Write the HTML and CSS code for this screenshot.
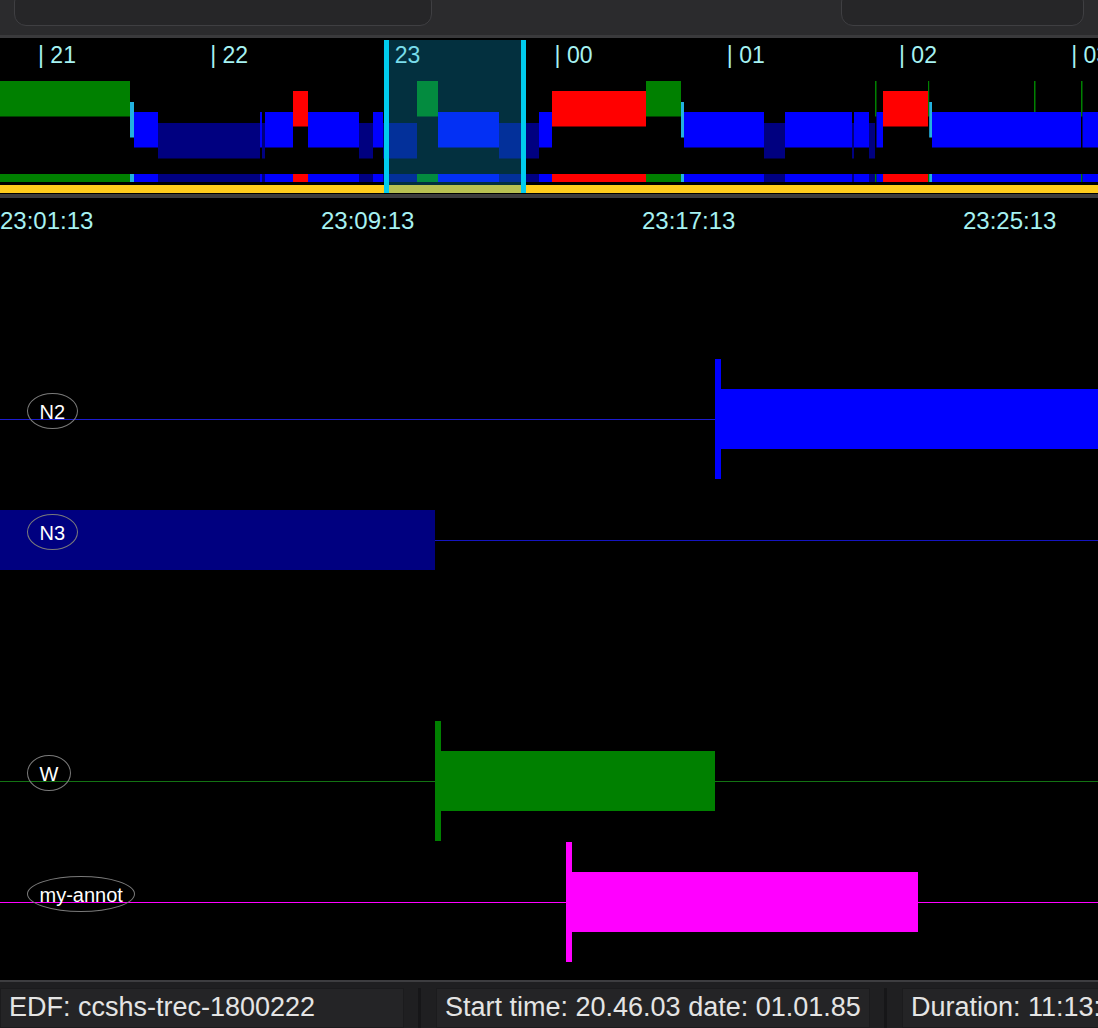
FILE: index.html
```html
<!DOCTYPE html>
<html lang="en">
<head>
    <meta charset="UTF-8">
    <title>Hypnogram viewer</title>
    <link rel="stylesheet" href="styles.css">
</head>
<body>
    <!-- Barra superior -->
    <div class="toolbar">
        <div class="tool-box first"></div>
        <div class="tool-box second"></div>
    </div>

    <!-- Vista general del hipnograma -->
    <svg id="overview" class="overview" width="1098" height="160" viewBox="0 0 1098 160"></svg>

    <div class="main">
        <!-- Eje de tiempo -->
        <div class="axis">
            <span>23:01:13</span>
            <span>23:09:13</span>
            <span>23:17:13</span>
            <span>23:25:13</span>
        </div>

        <!-- Pistas de anotaciones -->
        <div class="tracks">
            <div class="track"></div>

            <div class="track">
                <div class="line n2-line"></div>
                <div class="tick n2" style="left: 715px"></div>
                <div class="bar n2" style="left: 721px; width: 400px"></div>
                <div class="label">N2</div>
            </div>

            <div class="track">
                <div class="line n3-line"></div>
                <div class="bar n3" style="left: 0; width: 435px"></div>
                <div class="label">N3</div>
            </div>

            <div class="track short"></div>

            <div class="track">
                <div class="line w-line"></div>
                <div class="tick w" style="left: 435px"></div>
                <div class="bar w" style="left: 441px; width: 274px"></div>
                <div class="label">W</div>
            </div>

            <div class="track">
                <div class="line annot-line"></div>
                <div class="tick annot" style="left: 566px"></div>
                <div class="bar annot" style="left: 572px; width: 346px"></div>
                <div class="label">my-annot</div>
            </div>
        </div>
    </div>

    <!-- Barra de estado -->
    <div class="statusbar">
        <div class="cell edf">EDF: ccshs-trec-1800222</div>
        <div class="sep"></div>
        <div class="cell start">Start time: 20.46.03 date: 01.01.85</div>
        <div class="sep"></div>
        <div class="cell duration">Duration: 11:13:00</div>
    </div>

    <script>
        const NS = "http://www.w3.org/2000/svg";
        const svg = document.getElementById("overview");

        // Posicion vertical y color de cada estadio
        const stages = {
            W:  { y: 43, color: "#008000" },
            R:  { y: 53, color: "#ff0000" },
            N1: { y: 64, color: "#22b1e0" },
            N2: { y: 74, color: "#0000ff" },
            N3: { y: 85, color: "#000080" }
        };

        // [inicio, fin, estadio] en pixeles
        const epochs = [
            [0, 130, "W"], [130, 134, "N1"], [134, 158, "N2"], [158, 260, "N3"],
            [260, 262, "N2"], [262, 265, "N3"], [265, 293, "N2"], [293, 308, "R"],
            [308, 359, "N2"], [359, 373, "N3"], [373, 383, "N2"], [383, 417, "N3"],
            [417, 438, "W"], [438, 499, "N2"], [499, 539, "N3"], [539, 552, "N2"],
            [552, 646, "R"], [646, 681, "W"], [681, 684, "N1"], [684, 764, "N2"],
            [764, 785, "N3"], [785, 852, "N2"], [852, 854, "N3"], [854, 869, "N2"],
            [869, 875, "N3"], [875, 876.5, "W"], [876.5, 883, "N2"], [883, 928, "R"],
            [928, 929.2, "W"], [929.2, 932, "N1"], [932, 1081, "N2"], [1081, 1082.5, "W"],
            [1082.5, 1098, "N2"]
        ];

        function rect(x, y, w, h, fill, cls) {
            const r = document.createElementNS(NS, "rect");
            r.setAttribute("x", x);
            r.setAttribute("y", y);
            r.setAttribute("width", w);
            r.setAttribute("height", h);
            if (fill) r.setAttribute("fill", fill);
            if (cls) r.setAttribute("class", cls);
            svg.appendChild(r);
        }

        epochs.forEach(function(e) {
            const st = stages[e[2]];
            rect(e[0], st.y, e[1] - e[0], 35.5, st.color);
            rect(e[0], 136, e[1] - e[0], 8, st.color);
        });

        // pequeño despertar
        rect(1034, 43, 1.5, 31, "#008000");

        rect(0, 147, 1098, 8, null, "yellow");
        rect(0, 156, 1098, 4, null, "rule");

        // Etiquetas de horas
        ["21", "22", "23", "00", "01", "02", "03"].forEach(function(h, i) {
            const t = document.createElementNS(NS, "text");
            t.setAttribute("x", 38 + i * 172.2);
            t.setAttribute("y", 25);
            t.setAttribute("class", "hour");
            t.textContent = "| " + h;
            svg.appendChild(t);
        });

        // Ventana seleccionada
        rect(389, 2, 132, 153, null, "window");
        rect(384, 2, 5, 153, null, "handle");
        rect(521, 2, 5, 153, null, "handle");
    </script>
</body>
</html>
```

FILE: styles.css
```css
html, body {
    margin: 0;
    height: 100%;
}

body {
    font-family: "Liberation Sans", Arial, sans-serif;
    background-color: #000;
    display: flex;
    flex-direction: column;
    height: 1028px;
    overflow: hidden;
}

.toolbar {
    height: 35px;
    flex: none;
    display: flex;
    background-color: #2b2b2d;
    border-bottom: 3px solid #3a3a3c;
    overflow: hidden;
}

.tool-box {
    height: 36px;
    margin-top: -10px;
    box-sizing: border-box;
    background-color: #262628;
    border: 1.5px solid #3f3f42;
    border-radius: 12px;
}

.tool-box.first {
    margin-left: 14px;
    width: 418px;
}

.tool-box.second {
    margin-left: 409px;
    width: 243px;
}

.overview {
    display: block;
    flex: none;
}

.overview .hour {
    font-family: "Liberation Sans", Arial, sans-serif;
    font-size: 23px;
    fill: #a6f2f2;
}

.overview .yellow {
    fill: #ffcc1c;
}

.overview .rule {
    fill: #3a3a3c;
}

.overview .window {
    fill: rgba(10, 165, 217, 0.29);
}

.overview .handle {
    fill: #00ccee;
}

.main {
    flex: 1;
    overflow: hidden;
}

.axis {
    height: 39px;
    box-sizing: border-box;
    padding-top: 11px;
    display: flex;
    overflow: hidden;
    white-space: nowrap;
}

.axis span {
    flex: none;
    width: 321px;
    font-size: 24px;
    line-height: 24px;
    color: #a6f2f2;
}

.track {
    position: relative;
    height: 121px;
    overflow: hidden;
}

.track.short {
    height: 120px;
}

.line {
    position: absolute;
    left: 0;
    right: 0;
    top: 61px;
    height: 1px;
}

.n2-line { background-color: #1c1cd0; }
.n3-line { background-color: #1414c0; }
.w-line { background-color: #137313; }
.annot-line { background-color: #ff00ff; }

.tick {
    position: absolute;
    top: 1px;
    width: 6px;
    height: 120px;
}

.bar {
    position: absolute;
    top: 31px;
    height: 60px;
}

.n2 { background-color: #0000ff; }
.n3 { background-color: #000080; }
.w { background-color: #008000; }
.annot { background-color: #ff00ff; }

.label {
    position: relative;
    display: inline-block;
    margin-left: 27px;
    margin-top: 35px;
    height: 36px;
    line-height: 36px;
    padding: 0 11.5px;
    box-sizing: border-box;
    border: 1px solid #7a7a7a;
    border-radius: 50%;
    color: #fff;
    font-size: 20px;
}

.statusbar {
    flex: none;
    height: 48px;
    box-sizing: border-box;
    display: flex;
    padding-top: 6px;
    background-color: #1f1f21;
    border-top: 2px solid #3d3d40;
    white-space: nowrap;
    overflow: hidden;
}

.cell {
    flex: none;
    box-sizing: border-box;
    height: 40px;
    padding-left: 8px;
    background-color: #242426;
    border: 1px solid #1b1b1d;
    font-size: 27px;
    line-height: 36px;
    color: #e4e4e4;
    overflow: hidden;
}

.cell.edf {
    width: 404px;
}

.cell.start {
    width: 434px;
}

.cell.duration {
    width: 300px;
}

.sep {
    flex: none;
    width: 3px;
    margin: 0 15px 0 14px;
    background-color: #161618;
}
```
